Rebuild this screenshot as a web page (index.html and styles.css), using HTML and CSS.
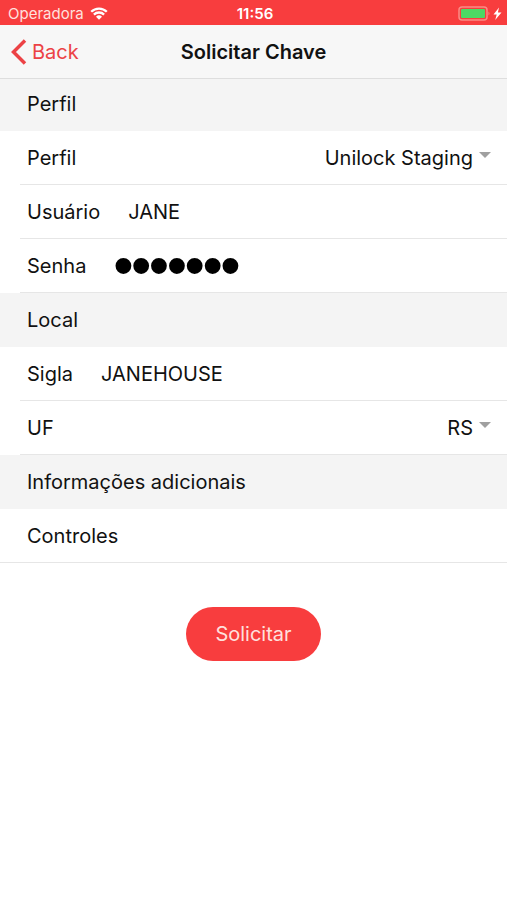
FILE: index.html
```html
<!DOCTYPE html>
<html lang="pt-BR">
<head>
<meta charset="utf-8">
<meta name="viewport" content="width=device-width, initial-scale=1">
<title>Solicitar Chave</title>
<link rel="stylesheet" href="styles.css">
</head>
<body>
<div class="status">
  <div class="status-left">
    <span>Operadora</span>
    <svg class="wifi" viewBox="0 0 18 13" width="18" height="13" aria-hidden="true">
      <path d="M1.200 4.800a11 11 0 0 1 15.600 0M3.900 7.600a7.200 7.200 0 0 1 10.200 0" fill="none" stroke="currentColor" stroke-width="2.300"/>
      <path d="M6 9.800a4.300 4.300 0 0 1 6 0L9 12.800z" fill="currentColor"/>
    </svg>
  </div>
  <time class="clock">11:56</time>
  <div class="status-right">
    <svg viewBox="0 0 44 15" width="44" height="15" aria-hidden="true">
      <rect x="1" y="1" width="28" height="13" rx="3" fill="none" stroke="#f98c85" stroke-width="1.500"/>
      <rect x="3" y="3" width="24" height="9" rx="1" fill="#4cd964"/>
      <path d="M30.500 5.500q2 2 0 4z" fill="#f98c85"/>
      <path d="M41 1.500 35.500 8.500h3.200L37.200 14 43.500 6.500h-3.600z" fill="#fff"/>
    </svg>
  </div>
</div>
<header class="nav">
  <a class="back" href="#">
    <svg viewBox="0 0 16 26" width="16" height="26" aria-hidden="true"><path d="M14 1.500 2.500 13 14 24.500" fill="none" stroke="currentColor" stroke-width="3.500"/></svg>
    <span>Back</span>
  </a>
  <h1 class="title">Solicitar Chave</h1>
</header>
<form class="form">
  <h2 class="section section-first">Perfil</h2>
  <div class="row">
    <label for="perfil">Perfil</label>
    <select id="perfil"><option>Unilock Staging</option></select>
    <svg class="caret" viewBox="0 0 12 6" width="12" height="6" aria-hidden="true"><path d="M0 0h12L6 6z" fill="currentColor"/></svg>
  </div>
  <div class="row">
    <label for="usuario">Usuário</label>
    <input id="usuario" type="text" value="JANE">
  </div>
  <div class="row">
    <label for="senha">Senha</label>
    <input id="senha" class="secret" type="password" value="1234567">
  </div>
  <h2 class="section">Local</h2>
  <div class="row">
    <label for="sigla">Sigla</label>
    <input id="sigla" type="text" value="JANEHOUSE">
  </div>
  <div class="row">
    <label for="uf">UF</label>
    <select id="uf"><option>RS</option></select>
    <svg class="caret" viewBox="0 0 12 6" width="12" height="6" aria-hidden="true"><path d="M0 0h12L6 6z" fill="currentColor"/></svg>
  </div>
  <h2 class="section">Informações adicionais</h2>
  <div class="row row-full">Controles</div>
  <button class="submit" type="button">Solicitar</button>
</form>
</body>
</html>
```
FILE: styles.css
```css
* { box-sizing: border-box; }
body {
  margin: 0;
  background: #fff;
  color: #111;
  font: 20px/24px Inter, "Liberation Sans", sans-serif;
}
.status {
  display: grid;
  grid-template-columns: 1fr auto 1fr;
  align-items: center;
  height: 25px;
  padding: 2px 5px 0 8px;
  background: #f83d3e;
  color: #fff;
  font-size: 15px;
  line-height: 20px;
}
.status-left { display: flex; align-items: center; gap: 6px; color: #ffe0dd; }
.wifi { color: #fff; }
.clock { font-weight: 600; }
.status-right { display: flex; justify-content: flex-end; }
.nav {
  display: grid;
  grid-template-columns: 1fr auto 1fr;
  align-items: center;
  height: 54px;
  padding: 0 11px;
  background: #f7f7f7;
  border-bottom: 1px solid #dedede;
}
.back {
  display: flex;
  align-items: center;
  gap: 5px;
  color: #ec4245;
  text-decoration: none;
}
.title { margin: 0; font-size: 20px; font-weight: 600; }
.form { display: flex; flex-direction: column; }
.section {
  display: flex;
  align-items: center;
  height: 54px;
  margin: 0;
  padding: 0 27px;
  background: #f4f4f4;
  font-size: 20px;
  font-weight: 400;
}
.section-first { height: 52px; padding-bottom: 2px; }
.row {
  display: flex;
  align-items: center;
  height: 54px;
  margin-left: 20px;
  padding: 0 16px 0 7px;
  border-bottom: 1px solid #e6e6e6;
}
.row-full { margin-left: 0; padding-left: 27px; }
input, select {
  flex: 1;
  min-width: 0;
  height: 50px;
  margin: 0;
  padding: 0;
  border: 0;
  outline: 0;
  background: none;
  color: inherit;
  font: inherit;
}
input { margin-left: 28px; }
select { appearance: none; text-align-last: right; }
.secret {
  color: #000;
  font-family: "Liberation Sans", sans-serif;
  font-size: 51px;
  line-height: 50px;
  -webkit-text-stroke: 2px #000;
}
.caret { margin: 0 0 6px 6px; color: #a0a0a0; }
.submit {
  align-self: center;
  height: 54px;
  margin-top: 44px;
  padding: 0 29px;
  border: 0;
  border-radius: 27px;
  background: #f83d3e;
  color: #ffe0dd;
  font: inherit;
}
```
